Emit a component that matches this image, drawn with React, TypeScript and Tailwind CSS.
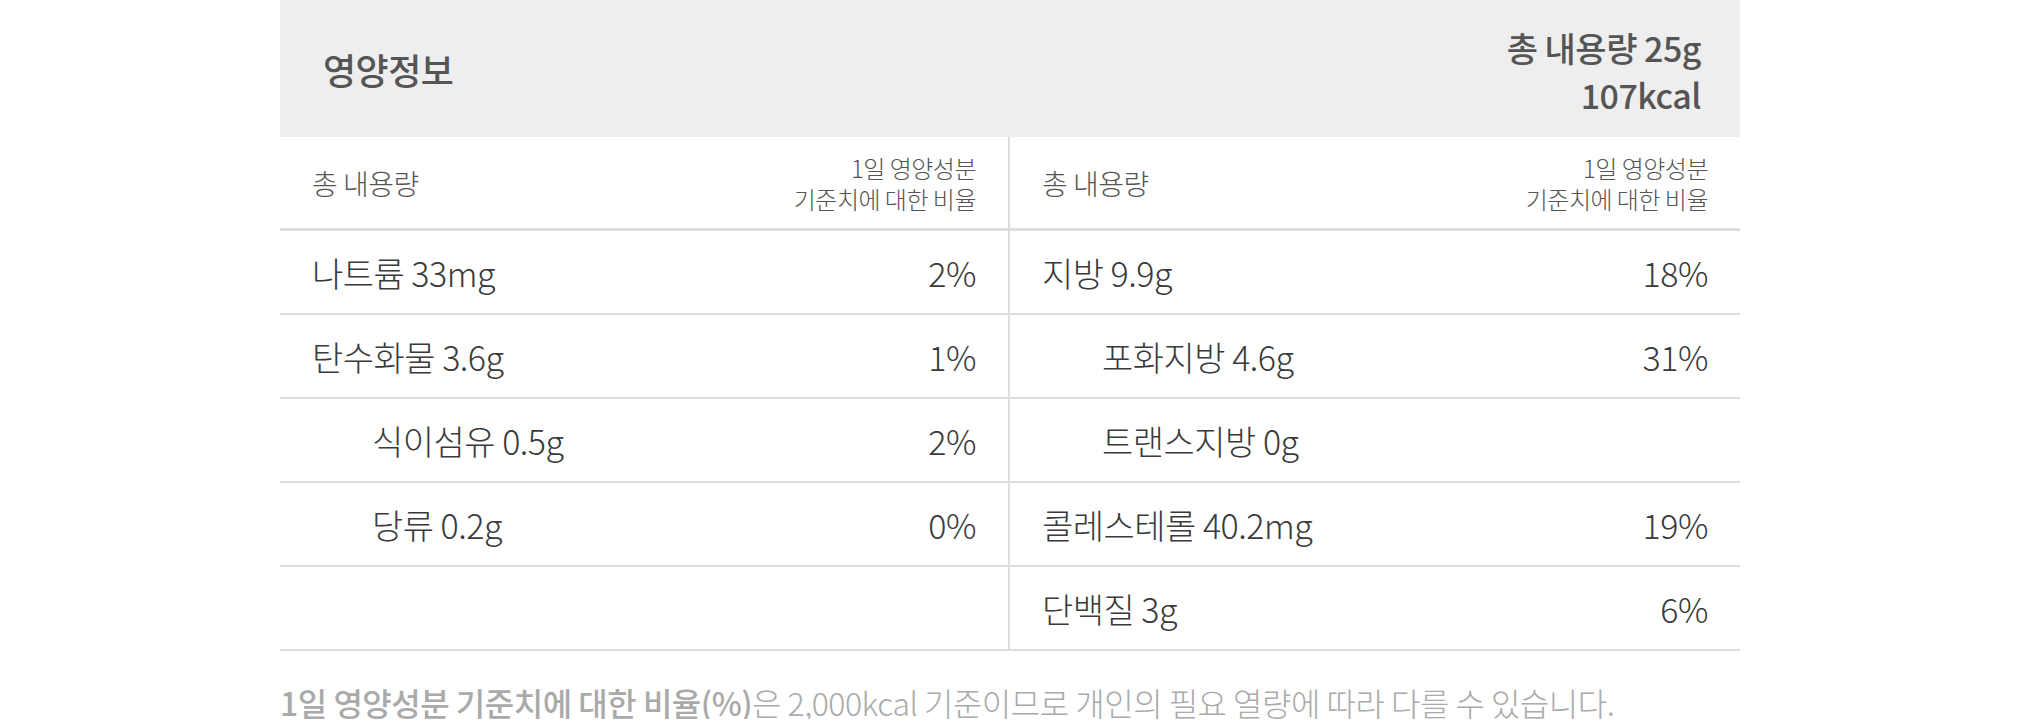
const font = "font-['Noto_Sans_CJK_KR','Noto_Sans',sans-serif]";

type Row = { label: string; value?: string; sub?: boolean } | null;

const leftRows: Row[] = [
  { label: '나트륨 33mg', value: '2%' },
  { label: '탄수화물 3.6g', value: '1%' },
  { label: '식이섬유 0.5g', value: '2%', sub: true },
  { label: '당류 0.2g', value: '0%', sub: true },
  null
];

const rightRows: Row[] = [
  { label: '지방 9.9g', value: '18%' },
  { label: '포화지방 4.6g', value: '31%', sub: true },
  { label: '트랜스지방 0g', sub: true },
  { label: '콜레스테롤 40.2mg', value: '19%' },
  { label: '단백질 3g', value: '6%' }
];

function Column({ rows, divider }: { rows: Row[]; divider?: boolean }) {
  return (
    <div className={`flex flex-col ${divider ? 'border-r-2 border-[#dddddd]' : ''}`}>
      {/* column head */}
      <div className="h-[94px] flex items-center justify-between px-8 border-b-[3px] border-[#dddddd] text-[#555555]">
        <span className="text-[28px] font-light tracking-[-0.5px]">총 내용량</span>
        <span className="text-[24px] font-light leading-[31px] text-right tracking-[-0.5px]">
          1일 영양성분
          <br />
          기준치에 대한 비율
        </span>
      </div>
      {rows.map((row, i) => (
        <div
          key={i}
          className="h-[84px] flex items-center justify-between px-8 border-b-2 border-[#dddddd] text-[34px] font-light text-[#3a3a3a] tracking-[-0.5px]"
        >
          {row && (
            <>
              <span className={row.sub ? 'pl-[60px]' : ''}>{row.label}</span>
              <span>{row.value}</span>
            </>
          )}
        </div>
      ))}
    </div>
  );
}

export default function App() {
  return (
    <div className={`w-full bg-white ${font}`}>
      <div className="w-[1460px] mx-auto">
        {/* Title bar */}
        <div className="h-[137px] bg-[#eeeeee] flex items-center justify-between pl-[43px] pr-[39px] text-[#555555]">
          <h2 className="text-[36px] font-medium tracking-[-0.5px]">영양정보</h2>
          <div className="text-[34px] font-medium leading-[47px] text-right pt-1 tracking-[-0.5px]">
            <div>총 내용량 25g</div>
            <div>107kcal</div>
          </div>
        </div>

        {/* Nutrient table */}
        <div className="grid grid-cols-2">
          <Column rows={leftRows} divider />
          <Column rows={rightRows} />
        </div>

        <p className="mt-[34px] text-[32px] leading-[34px] text-[#aaaaaa] font-light tracking-[-0.5px]">
          <span className="font-medium">1일 영양성분 기준치에 대한 비율(%)</span>은 2,000kcal 기준이므로 개인의 필요 열량에 따라 다를 수 있습니다.
        </p>
      </div>
    </div>
  );
}
